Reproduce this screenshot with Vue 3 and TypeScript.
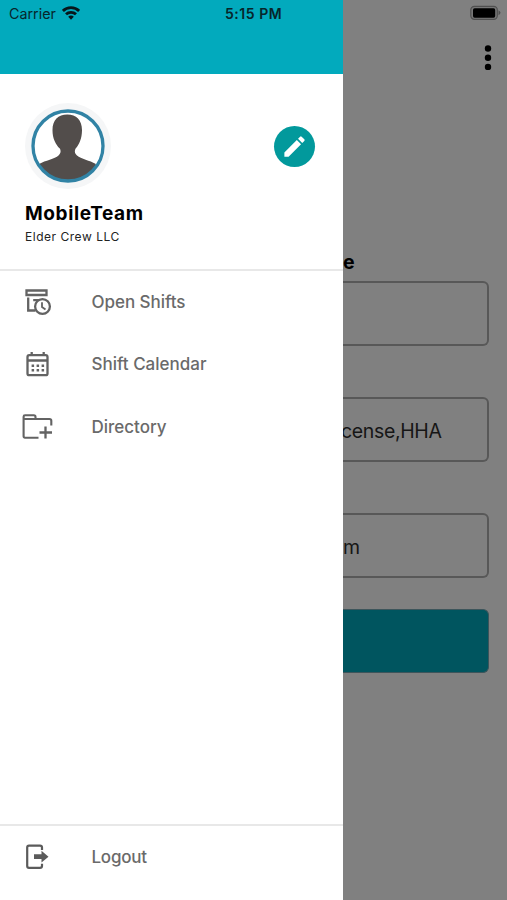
<script setup lang="ts">
interface MenuItem {
  id: string
  label: string
  width: number
}

const items: MenuItem[] = [
  { id: 'shifts', label: 'Open Shifts', width: 94 },
  { id: 'calendar', label: 'Shift Calendar', width: 115 },
  { id: 'directory', label: 'Directory', width: 75 },
]
</script>

<template>
  <div class="screen">
    <aside class="drawer">
      <header class="topbar">
        <span class="carrier">Carrier</span>
        <svg class="wifi" viewBox="0 0 18 14" width="18" height="14">
          <g fill="none" stroke="#07161a" stroke-width="2.8">
            <path d="M.9 4.9C5.2.6 12.8.6 17.1 4.9" />
            <path d="M4 8.3C6.8 5.6 11.2 5.6 14 8.3" />
          </g>
          <path d="M6.2 10.8C7.8 9.2 10.2 9.2 11.8 10.8L9 13.7z" fill="#07161a" />
        </svg>
        <span class="time">5:15 PM</span>
      </header>

      <section class="profile">
        <div class="profile-row">
          <svg class="avatar" viewBox="0 0 88 88" width="88" height="88">
            <defs>
              <clipPath id="face"><circle cx="44" cy="44" r="35.5" /></clipPath>
            </defs>
            <circle cx="44" cy="44" r="43" fill="#f5f6f7" />
            <circle cx="44" cy="44" r="35.5" fill="#fff" />
            <path
              clip-path="url(#face)"
              fill="#524d4b"
              d="M43.3 12.5C52.5 12.5 58.2 18.5 58 28.5C57.9 36 55.5 42.5 51.6 46.5C50.2 49 50.8 52 53 53.5C57 57 66 58.5 71.5 61.8L80 88H8L15.5 61.8C21 58.5 31 57 34.5 53.5C36.5 51.5 37.3 49 35.8 46.5C31.5 42.5 28.5 36 28.5 28.5C28.3 18.5 34 12.5 43.3 12.5Z"
            />
            <circle cx="44" cy="44" r="35" fill="none" stroke="#3183a5" stroke-width="3.3" />
          </svg>
          <button class="edit" aria-label="Edit profile">
            <svg viewBox="0 0 24 24" width="27" height="27" fill="#fff">
              <path d="M3 17.25V21h3.75L17.81 9.94l-3.75-3.75L3 17.25zM20.71 7.04a1 1 0 0 0 0-1.41l-2.34-2.34a1 1 0 0 0-1.41 0l-1.83 1.83 3.75 3.75 1.83-1.83z" />
            </svg>
          </button>
        </div>
        <h1 class="name">MobileTeam</h1>
        <p class="company">Elder Crew LLC</p>
      </section>

      <nav class="menu">
        <a v-for="item in items" :key="item.id" class="item">
          <svg
            class="icon"
            viewBox="0 0 34 34"
            width="34"
            height="34"
            fill="none"
            stroke="#636363"
            stroke-width="2.3"
          >
            <template v-if="item.id === 'shifts'">
              <path d="M6.5 5.5H26.5V10H6.5Z" />
              <path d="M8.2 12.5V25.5H15.5M13.2 15.2H19M17.5 15.5V19" />
              <circle cx="22.5" cy="21.5" r="7.4" fill="#fff" />
              <path d="M22 17.2V22L25.5 24.5" stroke-width="1.8" />
            </template>
            <template v-else-if="item.id === 'calendar'">
              <rect x="7.5" y="8.2" width="20" height="20" rx="1.8" />
              <path d="M7.5 13.5H27.5M11.7 4.9V8.5M23.7 4.9V8.5" />
              <path d="M11.6 18.7H24.2M11.6 23.2H24.2" stroke-width="2.5" stroke-dasharray="2.5 2.5" />
            </template>
            <template v-else>
              <path d="M18.5 27.7H5Q3.6 27.7 3.6 26.3V6.7Q3.6 5.3 5 5.3H13.8Q15.5 5.3 15.5 7V9H29.5Q31.3 9 31.3 10.7V15.5M3.5 9H16" stroke-width="2.1" />
              <path d="M25.5 16.5V28.5M19.5 22.5H32" />
            </template>
          </svg>
          <svg class="label" width="130" height="28">
            <text x="0.5" y="20" :textLength="item.width">{{ item.label }}</text>
          </svg>
        </a>
      </nav>

      <footer class="footer">
        <a class="item">
          <svg class="icon" viewBox="0 0 34 34" width="34" height="34" fill="none" stroke="#5b5b5b" stroke-width="2.2">
            <path d="M22 10V7.5Q22 5.6 20 5.6H9Q7.2 5.6 7.2 7.5V26Q7.2 27.8 9 27.8H20Q22 27.8 22 26V23.7" />
            <path d="M14 14.3H21.5V10.8L28.5 16.7L21.5 22.6V19.1H14Z" fill="#5b5b5b" stroke="none" />
          </svg>
          <svg class="label" width="130" height="28">
            <text x="0.5" y="20" textLength="55.5">Logout</text>
          </svg>
        </a>
      </footer>
    </aside>

    <main class="page">
      <div class="status">
        <svg viewBox="0 0 32 16" width="32" height="16">
          <rect x=".8" y="1.3" width="26.5" height="13" rx="3.6" fill="#777" stroke="#505050" stroke-width="1.2" />
          <rect x="3" y="3.3" width="22.2" height="9.4" rx="1.6" fill="#000" />
          <path d="M28.5 5.3Q32.5 7.8 28.5 10.3Z" fill="#505050" />
        </svg>
      </div>
      <svg class="more" viewBox="0 0 8 26" width="8" height="26">
        <circle cx="4" cy="3.5" r="3.2" />
        <circle cx="4" cy="12.7" r="3.2" />
        <circle cx="4" cy="21.9" r="3.2" />
      </svg>
      <div class="heading">e</div>
      <div class="field"></div>
      <div class="field"><span class="cense">cense,HHA</span></div>
      <div class="field"><span>m</span></div>
      <div class="submit"></div>
    </main>
  </div>
</template>

<style>
body {
  margin: 0;
}
</style>

<style scoped>
.screen {
  display: grid;
  grid-template-columns: 343px 1fr;
  height: 900px;
  overflow: hidden;
  font-family: Inter, "Liberation Sans", sans-serif;
  background: #808080;
}
.drawer {
  display: flex;
  flex-direction: column;
  background: #fff;
}
.topbar {
  display: flex;
  align-items: flex-start;
  height: 74px;
  padding-left: 9px;
  box-sizing: border-box;
  background: #02aabd;
  color: #07262b;
  font-size: 14px;
  line-height: 18px;
}
.carrier {
  width: 53px;
  padding-top: 5px;
  font-size: 14.3px;
  white-space: nowrap;
}
.wifi {
  margin-top: 6px;
}
.time {
  margin-left: 145px;
  padding-top: 5px;
  font-weight: 600;
  letter-spacing: 0.55px;
  white-space: nowrap;
}
.profile {
  height: 197px;
  box-sizing: border-box;
  border-bottom: 2px solid #e8e8e8;
  padding: 28px 28px 0 24px;
  color: #000;
}
.profile-row {
  display: flex;
  align-items: center;
  justify-content: space-between;
  height: 88px;
}
.edit {
  display: grid;
  place-items: center;
  width: 41px;
  height: 41px;
  padding: 0;
  border: 0;
  border-radius: 50%;
  background: #02999c;
}
.name {
  margin: 11px 0 0 1px;
  font-size: 19px;
  line-height: 25px;
  font-weight: 700;
  letter-spacing: 0.62px;
}
.company {
  margin: 2px 0 0 1px;
  color: #222;
  font-size: 12px;
  line-height: 18px;
  letter-spacing: 0.52px;
}
.menu {
  flex: 1;
}
.item {
  display: flex;
  align-items: center;
  height: 62.3px;
  padding-left: 20px;
}
.icon {
  flex: none;
}
.label {
  margin-left: 37px;
  overflow: visible;
}
.label text {
  font-size: 17px;
  font-weight: 500;
  fill: #6a6a6a;
}
.footer {
  height: 76px;
  box-sizing: border-box;
  border-top: 2px solid #e8e8e8;
}
.page {
  overflow: hidden;
}
.status {
  display: flex;
  justify-content: flex-end;
  height: 45px;
  padding: 5px 5px 0 0;
  box-sizing: border-box;
}
.more {
  display: block;
  margin-left: 141px;
}
.heading {
  height: 24px;
  margin-top: 179px;
  font-size: 19.5px;
  line-height: 24px;
  font-weight: 700;
}
.field {
  width: 146px;
  height: 65px;
  margin-bottom: 51px;
  box-sizing: border-box;
  border: 2px solid #585858;
  border-left: 0;
  border-radius: 0 6px 6px 0;
  color: #161616;
  font-size: 19.5px;
  line-height: 65px;
}
.heading + .field {
  margin-top: 7px;
}
.cense {
  margin-left: -2px;
  letter-spacing: -0.35px;
}
.submit {
  width: 146px;
  height: 64px;
  margin-top: -20.5px;
  box-sizing: border-box;
  border: 1px solid #3d555b;
  border-left: 0;
  border-radius: 0 6px 6px 0;
  background: #00555f;
}
</style>
